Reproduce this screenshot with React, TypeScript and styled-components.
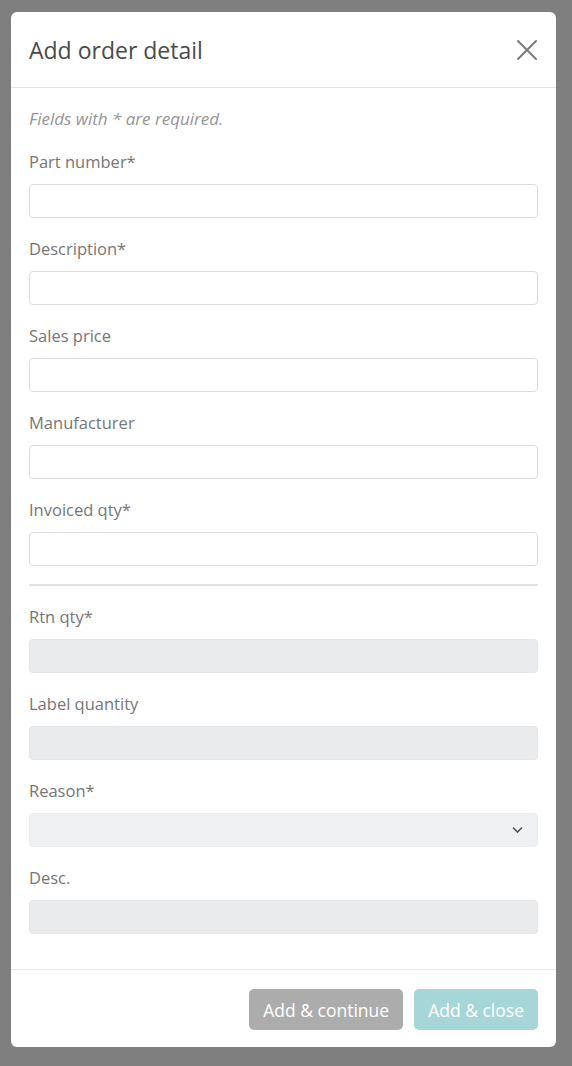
import React from "react";
import styled, { createGlobalStyle } from "styled-components";

const GlobalStyle = createGlobalStyle`
  html, body {
    margin: 0;
    padding: 0;
  }
  body {
    background: #808080;
    font-family: "Open Sans", "Noto Sans", sans-serif;
  }
  * {
    box-sizing: border-box;
  }
`;

const Backdrop = styled.div`
  min-height: 100vh;
  padding: 12px 16px 19px 11px;
  background: #7f7f7f;
`;

const Modal = styled.div`
  width: 545px;
  background: #ffffff;
  border-radius: 6px;
  display: flex;
  flex-direction: column;
  overflow: hidden;
`;

const Header = styled.div`
  height: 76px;
  padding: 0 17px 0 18px;
  display: flex;
  align-items: center;
  justify-content: space-between;
  border-bottom: 1px solid #e6e6e6;
`;

const Title = styled.h2`
  margin: 0;
  font-size: 23px;
  font-weight: 400;
  color: #4a4a4a;
`;

const CloseButton = styled.button`
  width: 24px;
  height: 24px;
  padding: 0;
  border: 0;
  background: transparent;
  display: flex;
  align-items: center;
  justify-content: center;
  cursor: pointer;
`;

const Body = styled.div`
  padding: 20px 18px 15px;
`;

const Hint = styled.p`
  margin: 0 0 21px;
  font-size: 17px;
  line-height: 22px;
  font-style: italic;
  color: #959595;
`;

const Field = styled.div`
  margin-bottom: 20px;
`;

const Label = styled.label`
  display: block;
  margin-bottom: 11px;
  font-size: 16.5px;
  line-height: 22px;
  color: #767676;
`;

const Input = styled.input`
  display: block;
  width: 100%;
  height: 34px;
  padding: 0 12px;
  border: 1px solid ${(p) => (p.disabled ? "#e4e6e8" : "#dddddd")};
  border-radius: 4px;
  background: ${(p) => (p.disabled ? "#e9ebed" : "#ffffff")};
  font: inherit;
  font-size: 15px;
  outline: none;
`;

const SelectWrap = styled.div`
  position: relative;
`;

const Select = styled.select`
  display: block;
  width: 100%;
  height: 34px;
  padding: 0 12px;
  border: 1px solid #e4e6e8;
  border-radius: 4px;
  background: #e9ebed;
  appearance: none;
  font: inherit;
  font-size: 15px;
  outline: none;
`;

const Chevron = styled.svg`
  position: absolute;
  right: 15px;
  top: 13px;
  pointer-events: none;
`;

const Divider = styled.hr`
  margin: -2px 0 20px;
  border: 0;
  border-top: 2px solid #e3e3e3;
`;

const Footer = styled.div`
  padding: 19px 18px 17px;
  display: flex;
  justify-content: flex-end;
  gap: 11px;
  border-top: 1px solid #e8e8e8;
`;

const Button = styled.button<{ $variant: "secondary" | "primary" }>`
  height: 41px;
  padding: 0 14px;
  border: 0;
  border-radius: 5px;
  font-family: "Open Sans", "Noto Sans", sans-serif;
  font-size: 17.5px;
  color: #ffffff;
  background: ${(p) => (p.$variant === "primary" ? "#a7d6d8" : "#acacac")};
  cursor: default;
`;

const textFields = [
  "Part number*",
  "Description*",
  "Sales price",
  "Manufacturer",
  "Invoiced qty*",
];

export default function App() {
  return (
    <>
      <GlobalStyle />
      <Backdrop>
        <Modal>
          <Header>
            <Title>Add order detail</Title>
            <CloseButton aria-label="Close">
              <svg width="22" height="22" viewBox="0 0 22 22">
                <path
                  d="M2 2 L20 20 M20 2 L2 20"
                  stroke="#7a7a7a"
                  strokeWidth="2"
                  strokeLinecap="round"
                />
              </svg>
            </CloseButton>
          </Header>
          <Body>
            <Hint>Fields with * are required.</Hint>
            {textFields.map((label) => (
              <Field key={label}>
                <Label>{label}</Label>
                <Input type="text" />
              </Field>
            ))}
            <Divider />
            <Field>
              <Label>Rtn qty*</Label>
              <Input type="text" disabled />
            </Field>
            <Field>
              <Label>Label quantity</Label>
              <Input type="text" disabled />
            </Field>
            <Field>
              <Label>Reason*</Label>
              <SelectWrap>
                <Select disabled defaultValue="">
                  <option value=""></option>
                </Select>
                <Chevron width="11" height="8" viewBox="0 0 11 8">
                  <path
                    d="M1 1.5 L5.5 6 L10 1.5"
                    fill="none"
                    stroke="#555"
                    strokeWidth="1.6"
                  />
                </Chevron>
              </SelectWrap>
            </Field>
            <Field>
              <Label>Desc.</Label>
              <Input type="text" disabled />
            </Field>
          </Body>
          <Footer>
            <Button $variant="secondary">Add &amp; continue</Button>
            <Button $variant="primary">Add &amp; close</Button>
          </Footer>
        </Modal>
      </Backdrop>
    </>
  );
}
